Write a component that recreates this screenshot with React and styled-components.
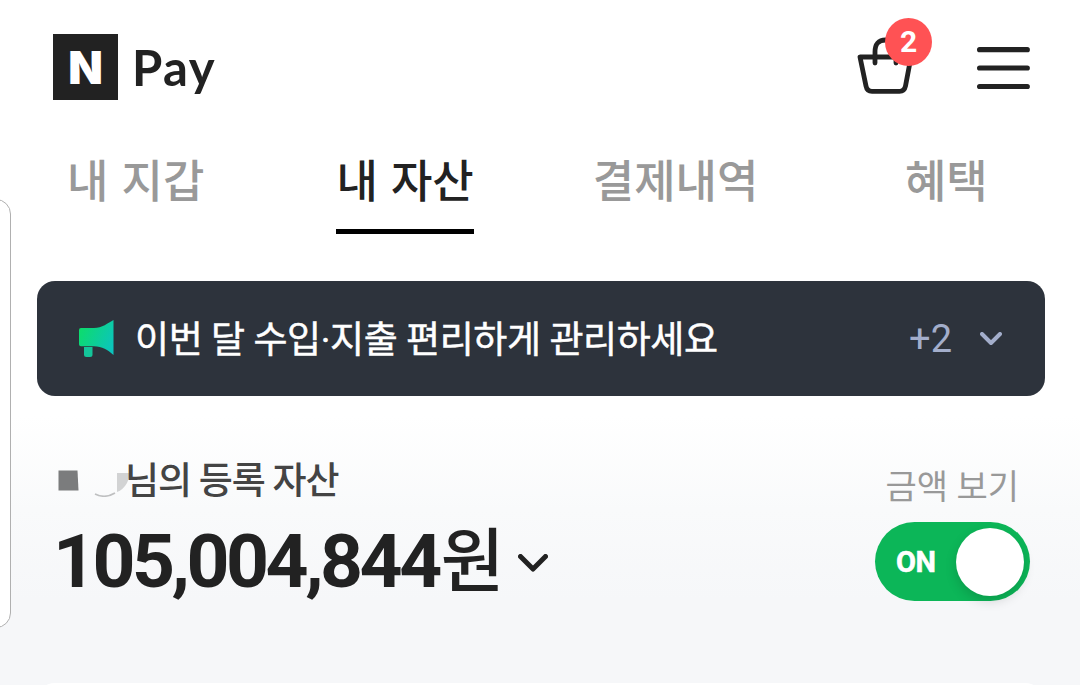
import React from 'react'
import styled, { createGlobalStyle } from 'styled-components'

const GlobalStyle = createGlobalStyle`
    * {
        box-sizing: border-box;
    }
    body {
        margin: 0;
        background: #fff;
        font-family: Roboto, "Noto Sans CJK KR", sans-serif;
        color: #222;
    }
`;

const tabs = [
    { label: '내 지갑', left: 67 },
    { label: '내 자산', left: 132, active: true },
    { label: '결제내역', left: 119 },
    { label: '혜택', left: 146.5 },
]

const BasketIcon = () => (
    <svg width="60" height="60" viewBox="0 0 60 60" fill="none" stroke="#222" strokeWidth="4.800" strokeLinecap="round" strokeLinejoin="round">
        <path d="M6 20H57L51.500 49Q50.400 54.300 45.500 54.300H18Q13 54.300 12 49Z" />
        <path d="M21 26V15Q21 3 31.500 3Q42 3 42 15V26" />
    </svg>
)

const MenuIcon = () => (
    <svg width="54" height="44" viewBox="0 0 54 44" stroke="#222" strokeWidth="5.200" strokeLinecap="round">
        <path d="M3.600 3.700H51.300M3.600 22H51.300M3.600 40.500H51.300" />
    </svg>
)

const SpeakerIcon = () => (
    <svg width="36" height="38" viewBox="0 0 36 38">
        <defs>
            <linearGradient id="speaker" x1="0" y1="0.300" x2="1" y2="0.750">
                <stop offset="0" stopColor="#0ddc6c" />
                <stop offset="1" stopColor="#0cc4bd" />
            </linearGradient>
        </defs>
        <path fill="#14c59a" d="M5 27H13.500V34.500Q13.500 37 11 37H7.500Q5 37 5 34.500Z" />
        <path fill="url(#speaker)" d="M2 8H15C23 8 29 3 34.500 0V35C29 30 23 26.300 15 26.300H2Q0 26.300 0 24.300V10Q0 8 2 8Z" />
    </svg>
)

const Chevron = ({ width, height, stroke, color }) => (
    <svg width={width} height={height} fill="none" stroke={color} strokeWidth={stroke} strokeLinecap="round" strokeLinejoin="round">
        <path d={`M${stroke / 2} ${stroke / 2}L${width / 2} ${height - stroke / 2 - 1}L${width - stroke / 2} ${stroke / 2}`} />
    </svg>
)

// hidden name in front of the title
const HiddenName = () => (
    <svg width="74" height="34" viewBox="0 0 74 34">
        <path fill="#7b7c7d" d="M1.500 7.500H20.500L21.500 27.500H1.500Z" />
        <path fill="none" stroke="#bfc0c1" strokeWidth="1.600" d="M38 31Q48 36 58 30" />
        <path fill="#d2d3d4" d="M60 10H74L70 20Q66 27 60 29Z" />
    </svg>
)

const App = () => {
    return (
        <Page>
            <GlobalStyle />
            <SidePanel />
            <Header>
                <LogoMark>N</LogoMark>
                <LogoText>Pay</LogoText>
                <BasketButton>
                    <BasketIcon />
                    <Badge>2</Badge>
                </BasketButton>
                <MenuButton>
                    <MenuIcon />
                </MenuButton>
            </Header>
            <Tabs>
                {tabs.map((tab) => (
                    <Tab key={tab.label} $active={tab.active} $left={tab.left}>{tab.label}</Tab>
                ))}
            </Tabs>
            <Banner>
                <SpeakerIcon />
                <BannerText>이번 달 수입·지출 편리하게 관리하세요</BannerText>
                <BannerCount>+2</BannerCount>
                <Chevron width={22} height={14} stroke={4} color="#a3aecb" />
            </Banner>
            <Asset>
                <AssetLeft>
                    <AssetTitle>
                        <HiddenName />
                        <span>님의 등록 자산</span>
                    </AssetTitle>
                    <AssetAmount>
                        <Amount>105,004,844</Amount>
                        <Won>원</Won>
                        <Chevron width={30} height={18.5} stroke={5} color="#222" />
                    </AssetAmount>
                </AssetLeft>
                <AssetRight>
                    <ToggleLabel>금액 보기</ToggleLabel>
                    <Toggle>
                        <ToggleText>ON</ToggleText>
                        <ToggleKnob />
                    </Toggle>
                </AssetRight>
            </Asset>
            <NextCard />
        </Page>
    )
}

export default App

const Page = styled.main`
    position: relative;
    width: 1080px;
    height: 685px;
    overflow: hidden;
    display: flex;
    flex-direction: column;
    background: linear-gradient(#fff 415px, #f9fafb 510px, #f6f7f9 600px);

    > * {
        flex-shrink: 0;
    }
`;

const SidePanel = styled.aside`
    position: absolute;
    left: -30px;
    top: 199px;
    width: 41px;
    height: 429px;
    background: #fff;
    border: 1.500px solid #b0b0b0;
    border-radius: 15px;
`;

const Header = styled.header`
    display: flex;
    align-items: flex-start;
    height: 134px;
    padding: 34px 50px 0 53px;
`;

const LogoMark = styled.div`
    display: flex;
    align-items: center;
    justify-content: center;
    width: 65px;
    height: 66px;
    background: #222;
    color: #fff;
    font-family: Inter, sans-serif;
    font-size: 45px;
    font-weight: 900;
    line-height: 67px;
`;

const LogoText = styled.div`
    margin-left: 14px;
    font-family: Lato, sans-serif;
    font-size: 49px;
    font-weight: 700;
    letter-spacing: 1.500px;
    line-height: 66px;
`;

const BasketButton = styled.div`
    position: relative;
    margin: 3px 62px 0 auto;
    height: 60px;

    svg {
        display: block;
    }
`;

const Badge = styled.span`
    position: absolute;
    left: 31px;
    top: -19px;
    width: 47px;
    height: 48px;
    border-radius: 50%;
    background: #ff5254;
    color: #fff;
    font-size: 30px;
    font-weight: 700;
    line-height: 47px;
    text-align: center;
`;

const MenuButton = styled.div`
    margin-top: 12px;
`;

const Tabs = styled.nav`
    display: flex;
    height: 101px;
`;

const Tab = styled.div`
    height: 100px;
    margin-left: ${({ $left }) => $left}px;
    border-bottom: 5px solid ${({ $active }) => ($active ? '#000' : 'transparent')};
    color: ${({ $active }) => ($active ? '#222' : '#999')};
    font-size: 45px;
    font-weight: 500;
    line-height: 97px;
    word-spacing: 2px;
    white-space: nowrap;
`;

const Banner = styled.section`
    display: flex;
    align-items: center;
    height: 115px;
    margin: 46px 35px 0 37px;
    padding: 0 43px 0 42px;
    border-radius: 18px;
    background: #2d333c;
`;

const BannerText = styled.p`
    margin: 0 auto 0 20px;
    padding-top: 4px;
    color: #fff;
    font-size: 37px;
    font-weight: 400;
    letter-spacing: -0.400px;
    line-height: 54px;
    white-space: nowrap;
    -webkit-text-stroke: 0.500px #fff;
`;

const BannerCount = styled.span`
    margin-right: 28px;
    color: #a3aecb;
    font-size: 38px;
    font-weight: 400;
`;

const Asset = styled.section`
    display: flex;
    justify-content: space-between;
    height: 287px;
    padding: 56px 50px 0 57px;
`;

const AssetLeft = styled.div`
    display: flex;
    flex-direction: column;
`;

const AssetTitle = styled.div`
    display: flex;
    align-items: center;
    height: 56px;
    color: #444;
    font-size: 37px;
    font-weight: 500;
    line-height: 56px;
    white-space: nowrap;

    span {
        margin-left: -6px;
        padding-top: 4px;
        letter-spacing: -1px;
        word-spacing: -0.500px;
    }
`;

const AssetAmount = styled.div`
    display: flex;
    align-items: center;
    height: 110px;
`;

const Amount = styled.strong`
    margin: -4px 2px 0 -4px;
    font-size: 75px;
    font-weight: 700;
    letter-spacing: -3.500px;
    line-height: 100px;
`;

const Won = styled.span`
    margin-right: 14px;
    font-size: 69px;
    font-weight: 500;
    line-height: 100px;
`;

const AssetRight = styled.div`
    display: flex;
    flex-direction: column;
    align-items: flex-end;
    padding-top: 10px;
`;

const ToggleLabel = styled.span`
    height: 60px;
    margin-right: 11px;
    color: #999;
    font-size: 34px;
    line-height: 50px;
`;

const Toggle = styled.div`
    display: flex;
    align-items: center;
    justify-content: space-between;
    width: 155px;
    height: 79px;
    padding: 0 6px 0 21px;
    border-radius: 40px;
    background: #0cb658;
`;

const ToggleText = styled.span`
    color: #fff;
    font-size: 29px;
    font-weight: 700;
    letter-spacing: -0.600px;
    -webkit-text-stroke: 0.500px #fff;
`;

const ToggleKnob = styled.span`
    width: 68px;
    height: 68px;
    border-radius: 50%;
    background: #fff;
    box-shadow: 0 5px 12px rgba(0, 0, 0, 0.150);
`;

const NextCard = styled.section`
    height: 40px;
    margin: 0 37px;
    border-radius: 18px;
    background: #fff;
`;
